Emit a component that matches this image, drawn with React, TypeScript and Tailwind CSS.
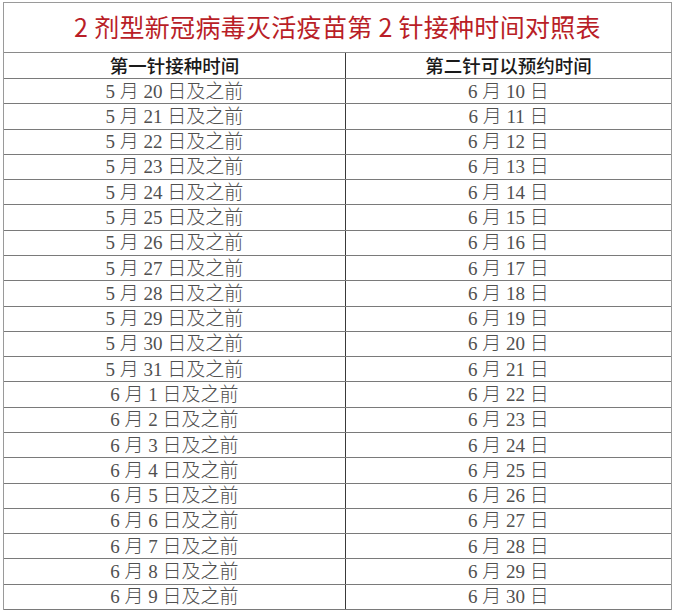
const SERIF = "font-['Liberation_Serif','Noto_Sans_CJK_SC',serif]";

const ROWS: [string, string][] = [];
for (let d = 20; d <= 31; d++) ROWS.push([`5 月 ${d} 日及之前`, ""]);
for (let d = 1; d <= 9; d++) ROWS.push([`6 月 ${d} 日及之前`, ""]);
ROWS.forEach((r, i) => (r[1] = `6 月 ${10 + i} 日`));

export default function App() {
  return (
    <div className="w-[676px] h-[612px] bg-white pt-[2px] pl-[3px]">
      <div className="w-[669px] border-t border-l border-r border-[#9a9a9a]">
        <div className="h-[50px] flex items-center justify-center border-b border-[#8a8a8a]">
          <h1 className="text-[25px] leading-none text-[#b91e27] font-['Noto_Sans_CJK_SC',sans-serif] pb-[2px] tracking-[0.3px]">
            2 剂型新冠病毒灭活疫苗第 2 针接种时间对照表
          </h1>
        </div>
        <div className="grid grid-cols-[342px_1fr] h-[26px] border-b border-[#7a7a7a] text-[18.5px] leading-none font-medium text-[#1a1a1a] font-['Noto_Sans_CJK_SC',sans-serif]">
          <div className="flex items-center justify-center border-r border-[#3a3a3a]">第一针接种时间</div>
          <div className="flex items-center justify-center">第二针可以预约时间</div>
        </div>
        {ROWS.map(([a, b]) => (
          <div
            key={a}
            className={`grid grid-cols-[342px_1fr] h-[25.286px] border-b border-[#7a7a7a] text-[19px] leading-none font-light text-[#505050] ${SERIF}`}
          >
            <div className="flex items-center justify-center border-r border-[#3a3a3a] whitespace-pre">{a}</div>
            <div className="flex items-center justify-center whitespace-pre">{b}</div>
          </div>
        ))}
      </div>
    </div>
  );
}
